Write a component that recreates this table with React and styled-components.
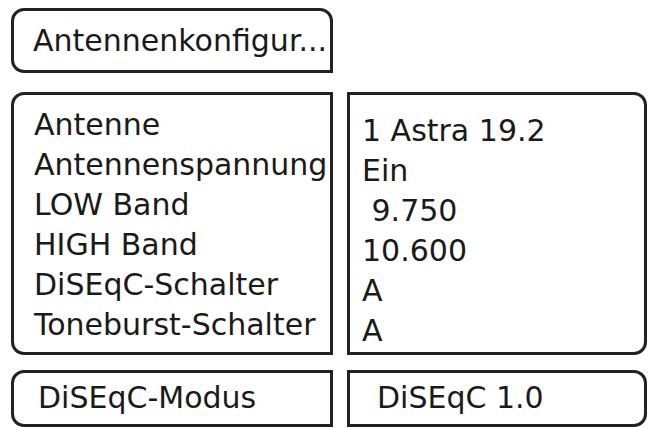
import styled, { createGlobalStyle } from 'styled-components'

const GlobalStyle = createGlobalStyle`
  body {
    margin: 0;
    background: #fff;
    font-family: "DejaVu Sans", Verdana, sans-serif;
    color: #1a1a1a;
  }
`

const labels = [
  'Antenne',
  'Antennenspannung',
  'LOW Band',
  'HIGH Band',
  'DiSEqC-Schalter',
  'Toneburst-Schalter',
]

const values = ['1 Astra 19.2', 'Ein', '\u00a09.750', '10.600', 'A', 'A']

const App = () => {
  return (
    <>
      <GlobalStyle />
      <Screen>
        <Title>Antennenkonfigur...</Title>
        <Spacer />
        <Panel $side='left'>
          {labels.map((l) => (
            <Line key={l}>{l}</Line>
          ))}
        </Panel>
        <Panel $side='right' $pad='16px 0 0 12px'>
          {values.map((v, i) => (
            <Line key={i}>{v}</Line>
          ))}
        </Panel>
        <Field $side='left'>DiSEqC-Modus</Field>
        <Field $side='right' $indent='27px'>DiSEqC 1.0</Field>
      </Screen>
    </>
  )
}

const Screen = styled.div`
  display: grid;
  grid-template-columns: 322px 300px;
  column-gap: 14px;
  padding: 8px 0 0 11px;
  width: 651px;
  height: 428px;
  box-sizing: border-box;
`

const Box = styled.div`
  border: 3px solid #222;
  box-sizing: border-box;
  background: #fff;
  overflow: visible;
  border-radius: ${(p) =>
    p.$side === 'left' ? '13px 0 0 13px' : '0 13px 13px 0'};
`

const Title = styled(Box)`
  height: 65px;
  border-radius: 13px 13px 0 13px;
  padding-left: 19px;
  display: flex;
  align-items: center;
  font-size: 30px;
  white-space: nowrap;
`

const Spacer = styled.div``

const Panel = styled(Box)`
  margin-top: 18px;
  height: 263px;
  padding: ${(p) => p.$pad || '10px 0 0 20px'};
`

const Line = styled.div`
  font-size: 30px;
  line-height: 40px;
  white-space: nowrap;
`

const Field = styled(Box)`
  margin-top: 14px;
  height: 57px;
  display: flex;
  align-items: center;
  padding: 0 0 2px ${(p) => p.$indent || '24px'};
  font-size: 30px;
  white-space: nowrap;
`

export default App
